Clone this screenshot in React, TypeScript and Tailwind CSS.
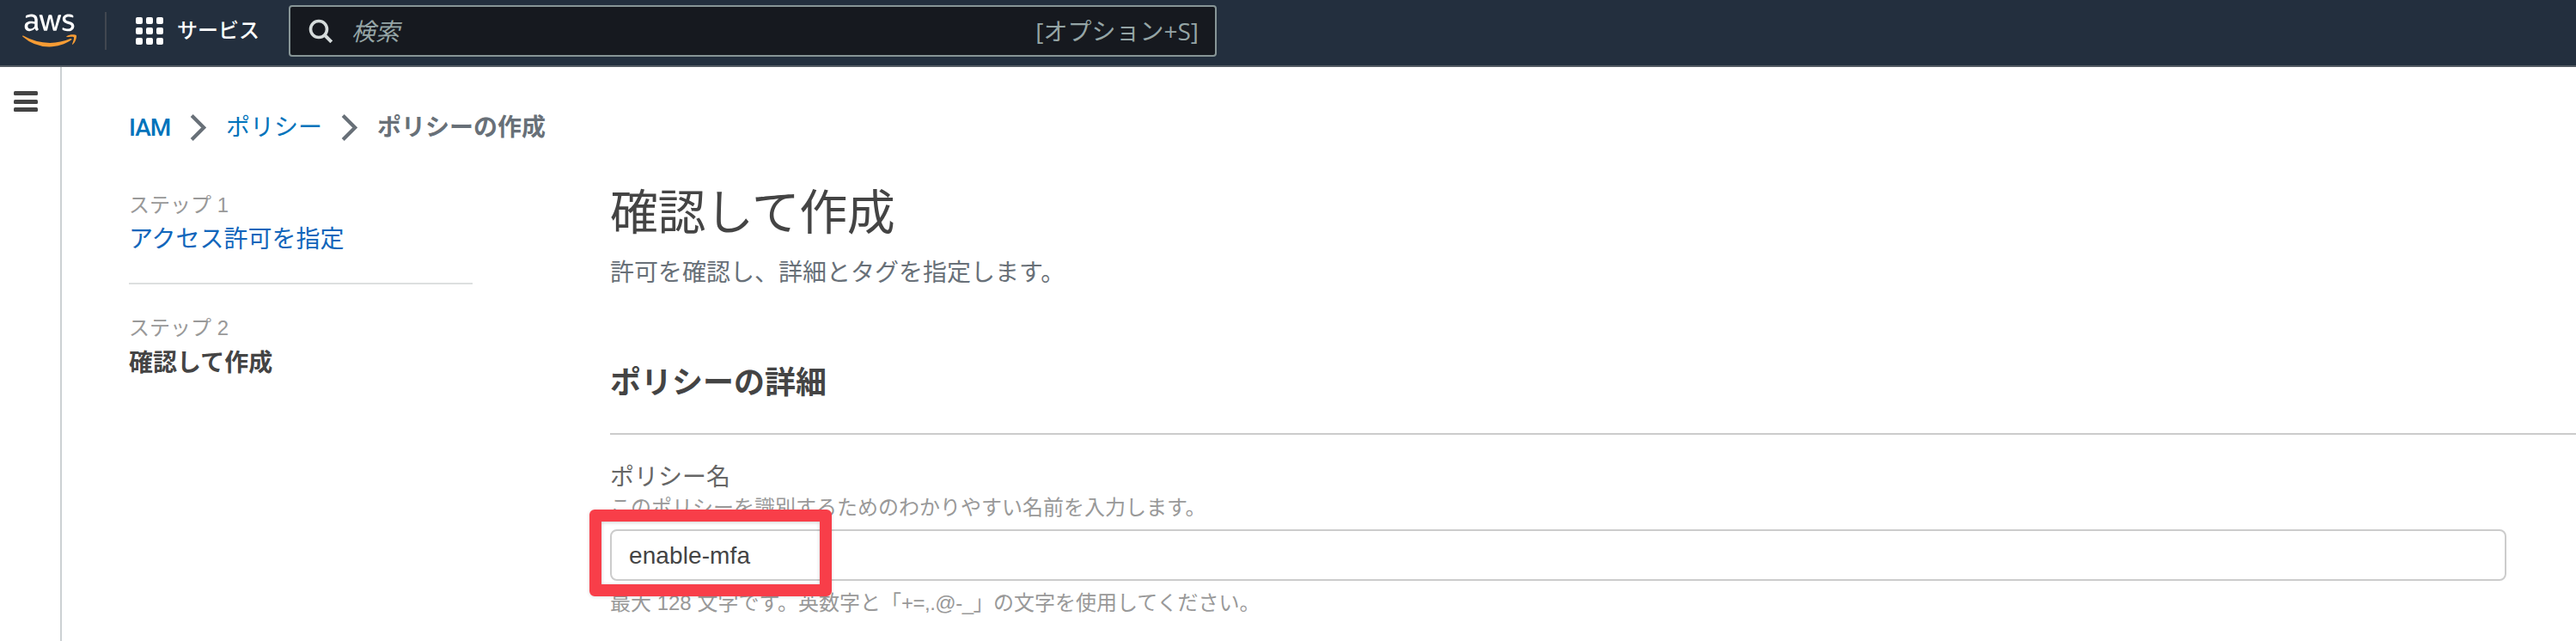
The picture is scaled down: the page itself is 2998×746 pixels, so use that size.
import React from "react";
import { FaAws } from "react-icons/fa";

const ui = "font-['Liberation_Sans','Noto_Sans_CJK_JP',sans-serif]";
const nav = "font-['Open_Sans','Noto_Sans_CJK_JP',sans-serif]";

function AwsLogo() {
  return (
    <div className="flex h-[50px] w-[64px] items-center">
      <svg width="0" height="0" aria-hidden="true">
        <defs>
          <linearGradient id="awsFill" x1="0" y1="0" x2="0" y2="1">
            <stop offset="0.585" stopColor="#ffffff" />
            <stop offset="0.585" stopColor="#f79c34" />
          </linearGradient>
        </defs>
      </svg>
      <FaAws fill="url(#awsFill)" className="mb-[2px] h-[51px] w-[63px] shrink-0" />
    </div>
  );
}

function ServicesGrid() {
  return (
    <div className="grid grid-cols-3 gap-[4px]">
      {Array.from({ length: 9 }, (_, i) => (
        <span key={i} className="size-[8px] rounded-[2px] bg-white" />
      ))}
    </div>
  );
}

function SearchIcon() {
  return (
    <svg width="28" height="28" viewBox="0 0 28 28" fill="none" stroke="#d5dbdb">
      <circle cx="12" cy="12" r="9.5" strokeWidth="3.6" />
      <path d="M18.4 18.4L26.8 26.8" strokeWidth="4" />
    </svg>
  );
}

function Chevron() {
  return (
    <svg width="20" height="32" viewBox="0 0 20 32" fill="none" stroke="#687078" strokeWidth="4.2">
      <path d="M2.2 2.4L16.2 16.4L2.2 30.4" />
    </svg>
  );
}

function Header() {
  return (
    <header className={`flex h-[78px] shrink-0 items-start border-b-2 border-[#545b64] bg-[#232f3e] ${nav}`}>
      <div className="flex h-[72px] items-center pl-[26px]">
        <AwsLogo />
        <span className="ml-[32px] h-[44px] w-[2px] bg-[#414750]" />
        <div className="ml-[34px] flex items-center gap-[16px]">
          <ServicesGrid />
          <span className="mb-[2px] w-[130px] text-[24px] leading-[36px] font-medium text-white">サービス</span>
        </div>
      </div>
      <div className="mt-[6px] flex h-[60px] w-[1080px] items-center rounded-[4px] border-2 border-[#879596] bg-[#16191f] pr-[19px] pl-[21px] text-[28px] leading-[40px] text-[#95a5a6]">
        <SearchIcon />
        <span className="ml-[22px] grow italic">検索</span>
        <span>[オプション+S]</span>
      </div>
    </header>
  );
}

function Sidebar() {
  return (
    <aside className="flex w-[72px] shrink-0 flex-col items-start gap-[4.5px] border-r-2 border-[#ccd1d3] pt-[28px] pl-[16px]">
      <span className="h-[5px] w-[28px] rounded-[1.5px] bg-[#444]" />
      <span className="h-[5px] w-[28px] rounded-[1.5px] bg-[#444]" />
      <span className="h-[5px] w-[28px] rounded-[1.5px] bg-[#444]" />
    </aside>
  );
}

function Breadcrumb() {
  return (
    <nav className="flex h-[36px] items-center text-[28px] leading-[36px] font-['Roboto','Noto_Sans_CJK_JP',sans-serif]">
      <a className="mt-[2px] w-[71px] font-medium tracking-[-1px] text-[#0073bb]">IAM</a>
      <Chevron />
      <a className="mt-[2px] ml-[22px] w-[134px] text-[#0073bb]">ポリシー</a>
      <Chevron />
      <span className="mt-[2px] ml-[22px] font-bold text-[#687078]">ポリシーの作成</span>
    </nav>
  );
}

function Steps() {
  return (
    <div className="flex w-[400px] shrink-0 flex-col pt-[1px]">
      <span className="text-[24px] leading-[36px] text-[#999]">ステップ 1</span>
      <a className="mt-[2px] text-[28px] leading-[40px] text-[#1166bb]">アクセス許可を指定</a>
      <hr className="mt-[30px] border-t-2 border-[#dddfdf]" />
      <span className="mt-[33px] text-[24px] leading-[36px] text-[#999]">ステップ 2</span>
      <span className="mt-[3px] text-[28px] leading-[40px] font-bold text-[#444]">確認して作成</span>
    </div>
  );
}

function PolicyForm() {
  return (
    <section className="-mt-[7px] flex min-w-0 grow flex-col">
      <h1 className="text-[56px] leading-[70px] tracking-[-0.5px] text-[#444]">確認して作成</h1>
      <p className="mt-[15px] text-[28px] leading-[40px] text-[#687078]">許可を確認し、詳細とタグを指定します。</p>
      <h2 className="mt-[86px] border-b-2 border-[#ccc] pb-[36px] text-[36px] leading-[44px] font-bold text-[#444]">
        ポリシーの詳細
      </h2>
      <label className="mt-[34px] text-[28px] leading-[32px] text-[#666]">ポリシー名</label>
      <span className="mt-[5px] text-[24px] leading-[28px] text-[#999]">
        このポリシーを識別するためのわかりやすい名前を入力します。
      </span>
      <div className="relative mt-[11px] mr-[81px] flex h-[60px] items-center rounded-[8px] border-2 border-[#ccc] pt-[2px] pl-[20px] text-[28px] leading-[40px] text-[#444]">
        <span className="tracking-[0.1px]">enable-mfa</span>
        <div className="absolute -top-[25px] -left-[26px] h-[101px] w-[282px] rounded-[6px] border-[14px] border-[#f83e49] shadow-[0_1px_4px_rgba(0,0,0,0.12),inset_0_1px_4px_rgba(0,0,0,0.2)]" />
      </div>
      <span className="mt-[12px] text-[24px] leading-[28px] text-[#999]">
        最大 128 文字です。英数字と「<span className="tracking-[-0.5px]">+=,.@-_」</span>の文字を使用してください。
      </span>
    </section>
  );
}

export default function App() {
  return (
    <div lang="ja" className={`flex h-[746px] w-full flex-col overflow-hidden bg-white ${ui}`}>
      <Header />
      <div className="flex grow">
        <Sidebar />
        <main className="flex min-w-0 grow flex-col pt-[52px] pl-[78px]">
          <Breadcrumb />
          <div className="mt-[54px] flex gap-[160px]">
            <Steps />
            <PolicyForm />
          </div>
        </main>
      </div>
    </div>
  );
}
